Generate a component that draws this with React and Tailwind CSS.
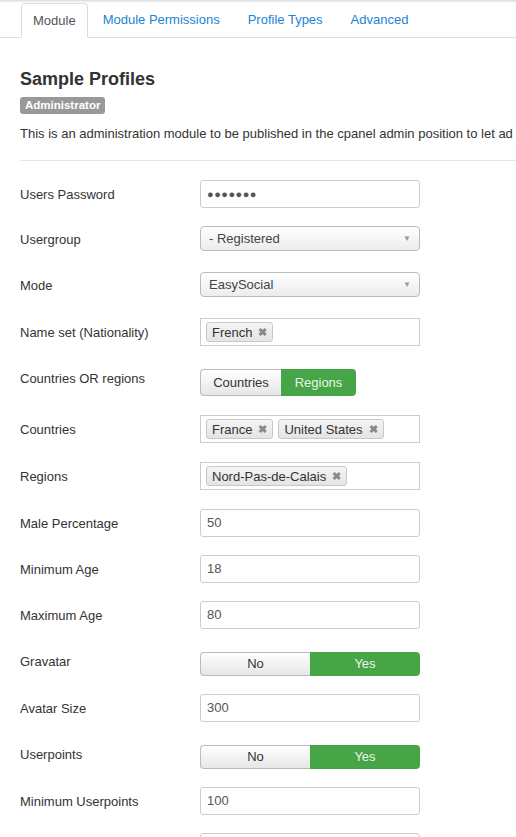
import React from "react";

const font = { fontFamily: '"Liberation Sans", Arial, sans-serif' };

const Tag = ({ children }) => (
  <span className="inline-flex items-center h-[20px] px-[5px] mr-[5px] border border-[#c8c8c8] rounded-[3px] bg-gradient-to-b from-[#f4f4f4] to-[#e4e4e4] text-[13px] text-[#333] leading-none">
    {children}
    <span className="ml-[6px] text-[11px] text-[#888] font-bold">✖</span>
  </span>
);

const TextInput = ({ value }) => (
  <div className="w-[220px] h-[28px] border border-[#ccc] rounded-[3px] bg-white flex items-center px-[6px] text-[13px] text-[#555]">
    {value}
  </div>
);

const Select = ({ value }) => (
  <div className="w-[220px] h-[25px] border border-[#bbb] rounded-[4px] bg-gradient-to-b from-white to-[#ececec] flex items-center justify-between pl-[8px] pr-[8px] text-[13px] text-[#444]">
    <span>{value}</span>
    <span className="text-[8px] text-[#999]">▼</span>
  </div>
);

const Tags = ({ items }) => (
  <div className="w-[220px] h-[28px] border border-[#ccc] bg-white flex items-center pl-[5px]">
    {items.map((t) => (
      <Tag key={t}>{t}</Tag>
    ))}
  </div>
);

const YesNo = () => (
  <div className="w-[220px] h-[24px] flex text-[13px]">
    <div className="w-[110px] flex items-center justify-center border border-[#bbb] border-r-0 rounded-l-[4px] bg-gradient-to-b from-white to-[#e6e6e6] text-[#333]">
      No
    </div>
    <div className="w-[110px] flex items-center justify-center rounded-r-[4px] bg-[#46a546] text-[#e8f5e8]">
      Yes
    </div>
  </div>
);

const Radio = () => (
  <div className="h-[27px] flex text-[13px]">
    <div className="w-[81px] flex items-center justify-center border border-[#bbb] border-r-0 rounded-l-[4px] bg-gradient-to-b from-white to-[#e6e6e6] text-[#333]">
      Countries
    </div>
    <div className="w-[75px] flex items-center justify-center rounded-r-[4px] bg-[#46a546] text-[#e8f5e8]">
      Regions
    </div>
  </div>
);

const Row = ({ label, children, h = "h-[46px]", pt = "pt-[5px]" }) => (
  <div className={`flex items-start ${h}`}>
    <div className={`w-[180px] text-[13px] text-[#333] ${pt}`}>{label}</div>
    <div>{children}</div>
  </div>
);

export default function App() {
  return (
    <div className="w-[516px] h-[837px] overflow-hidden bg-white" style={font}>
      <div className="h-[3px] bg-gradient-to-b from-[#dcdcdc] to-white" />
      <div className="flex border-b border-[#ddd] pl-[21px] h-[35px] text-[13px]">
        <div className="px-[11px] flex items-center border border-[#ddd] border-b-white rounded-t-[4px] bg-white text-[#555] -mb-px">
          Module
        </div>
        <div className="px-[15px] flex items-center text-[#2384d3]">Module Permissions</div>
        <div className="px-[13px] flex items-center text-[#2384d3]">Profile Types</div>
        <div className="px-[15px] flex items-center text-[#2384d3]">Advanced</div>
      </div>

      <div className="pl-[20px]">
        <h2 className="mt-[30px] text-[18px] font-bold text-[#333] leading-[22px]">Sample Profiles</h2>
        <span className="inline-block mt-[7px] px-[5px] h-[17px] leading-[17px] bg-[#999] text-white text-[11.5px] font-bold rounded-[3px]">
          Administrator
        </span>
        <p className="mt-[9px] text-[13px] leading-[18px] text-[#333] whitespace-nowrap">
          This is an administration module to be published in the cpanel admin position to let ad
        </p>
        <div className="mt-[17px] border-t border-[#e5e5e5] mr-[-20px]" />

        <div className="pt-[19px]">
          <Row label="Users Password">
            <TextInput value={<span className="tracking-[0.5px] text-[#555] text-[11px]">●●●●●●●</span>} />
          </Row>
          <Row label="Usergroup" pt="pt-[4px]">
            <Select value="- Registered" />
          </Row>
          <Row label="Mode" pt="pt-[4px]">
            <Select value="EasySocial" />
          </Row>
          <Row label="Name set (Nationality)" h="h-[51px]">
            <Tags items={["French"]} />
          </Row>
          <Row label="Countries OR regions" pt="pt-0">
            <Radio />
          </Row>
          <Row label="Countries" h="h-[47px]">
            <Tags items={["France", "United States"]} />
          </Row>
          <Row label="Regions" h="h-[47px]">
            <Tags items={["Nord-Pas-de-Calais"]} />
          </Row>
          <Row label="Male Percentage">
            <TextInput value="50" />
          </Row>
          <Row label="Minimum Age">
            <TextInput value="18" />
          </Row>
          <Row label="Maximum Age" h="h-[51px]">
            <TextInput value="80" />
          </Row>
          <Row label="Gravatar" h="h-[42px]" pt="pt-0">
            <YesNo />
          </Row>
          <Row label="Avatar Size" h="h-[51px]">
            <TextInput value="300" />
          </Row>
          <Row label="Userpoints" h="h-[42px]" pt="pt-0">
            <YesNo />
          </Row>
          <Row label="Minimum Userpoints">
            <TextInput value="100" />
          </Row>
          <Row label="">
            <TextInput value="" />
          </Row>
        </div>
      </div>
    </div>
  );
}
